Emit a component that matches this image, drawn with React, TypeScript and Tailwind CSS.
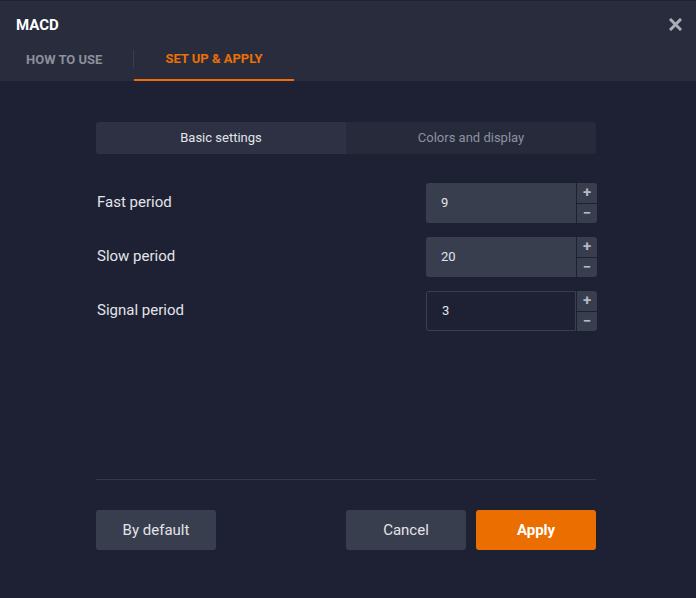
import React from "react";

function Stepper({ value, active }: { value: string; active?: boolean }) {
  return (
    <div className="flex items-stretch h-[40px] -mr-[1px]">
      <div
        className={
          active
            ? "w-[150px] rounded-l-[3px] border border-[#3a3f50] bg-[#1d2133] flex items-center pl-[15px] text-[13px] text-[#e2e4ea]"
            : "w-[150px] rounded-l-[3px] bg-[#393e4e] flex items-center pl-[15px] text-[13px] text-[#e2e4ea]"
        }
      >
        {value}
      </div>
      <div className="ml-[1px] flex flex-col gap-[1px] w-[20px]">
        <button className="flex-1 bg-[#393e4e] rounded-tr-[3px] flex items-center justify-center text-[#b5b9c4] text-[15px] font-bold leading-none">
          +
        </button>
        <button className="flex-1 bg-[#393e4e] rounded-br-[3px] flex items-center justify-center text-[#b5b9c4] text-[15px] font-bold leading-none">
          −
        </button>
      </div>
    </div>
  );
}

export default function App() {
  return (
    <div
      className="w-[696px] h-[598px] bg-[#1d2133] flex flex-col"
      style={{ fontFamily: "Roboto, 'Liberation Sans', sans-serif" }}
    >
      <div className="h-[81px] bg-[#282c3c] border-t border-[#1f2230] flex flex-col relative">
        <div className="pl-[16px] pt-[15px] text-[15px] font-bold text-white leading-[18px]">MACD</div>
        <button className="absolute right-[14px] top-[17px] text-[#a9adb8]">
          <svg width="13" height="13" viewBox="0 0 13 13">
            <path d="M2 2 L11 11 M11 2 L2 11" stroke="currentColor" strokeWidth="3" strokeLinecap="square" />
          </svg>
        </button>
        <div className="mt-auto flex items-stretch h-[45px]">
          <div className="w-[133px] flex items-center pl-[26px] pt-[3px] text-[13px] font-bold text-[#8c909c]">
            HOW TO USE
          </div>
          <div className="w-[1px] bg-[#3a3e4e] mt-[14px] mb-[13px]"></div>
          <div className="w-[160px] flex items-center justify-center pt-[3px] text-[13px] font-bold text-[#ec7005] border-b-2 border-[#ec7005]">
            SET UP &amp; APPLY
          </div>
        </div>
      </div>

      <div className="flex-1 pl-[96px] pr-[100px] pt-[41px] flex flex-col">
        <div className="flex h-[32px] rounded-[3px] overflow-hidden bg-[#262a3b] text-[13px]">
          <div className="w-1/2 bg-[#2d3143] flex items-center justify-center text-[#e3e5ea]">
            Basic settings
          </div>
          <div className="w-1/2 flex items-center justify-center text-[#8e92a0]">Colors and display</div>
        </div>

        <div className="mt-[29px] flex flex-col gap-[14px]">
          {[
            ["Fast period", "9", false],
            ["Slow period", "20", false],
            ["Signal period", "3", true],
          ].map(([label, value, active]) => (
            <div key={label as string} className="flex items-center justify-between">
              <div className="pl-[1px] pb-[1px] text-[15px] text-[#e2e4ea]">{label as string}</div>
              <Stepper value={value as string} active={active as boolean} />
            </div>
          ))}
        </div>

        <div className="mt-auto h-[1px] bg-[#343849] mb-[30px]"></div>
        <div className="flex items-center mb-[48px]">
          <button className="w-[120px] h-[40px] rounded-[3px] bg-[#393e4e] text-[15px] text-[#e2e4ea]">
            By default
          </button>
          <div className="flex-1"></div>
          <button className="w-[120px] h-[40px] rounded-[3px] bg-[#393e4e] text-[15px] text-[#e2e4ea]">
            Cancel
          </button>
          <button className="ml-[10px] w-[120px] h-[40px] rounded-[3px] bg-[#eb6f00] text-[15px] font-bold text-white">
            Apply
          </button>
        </div>
      </div>
    </div>
  );
}
